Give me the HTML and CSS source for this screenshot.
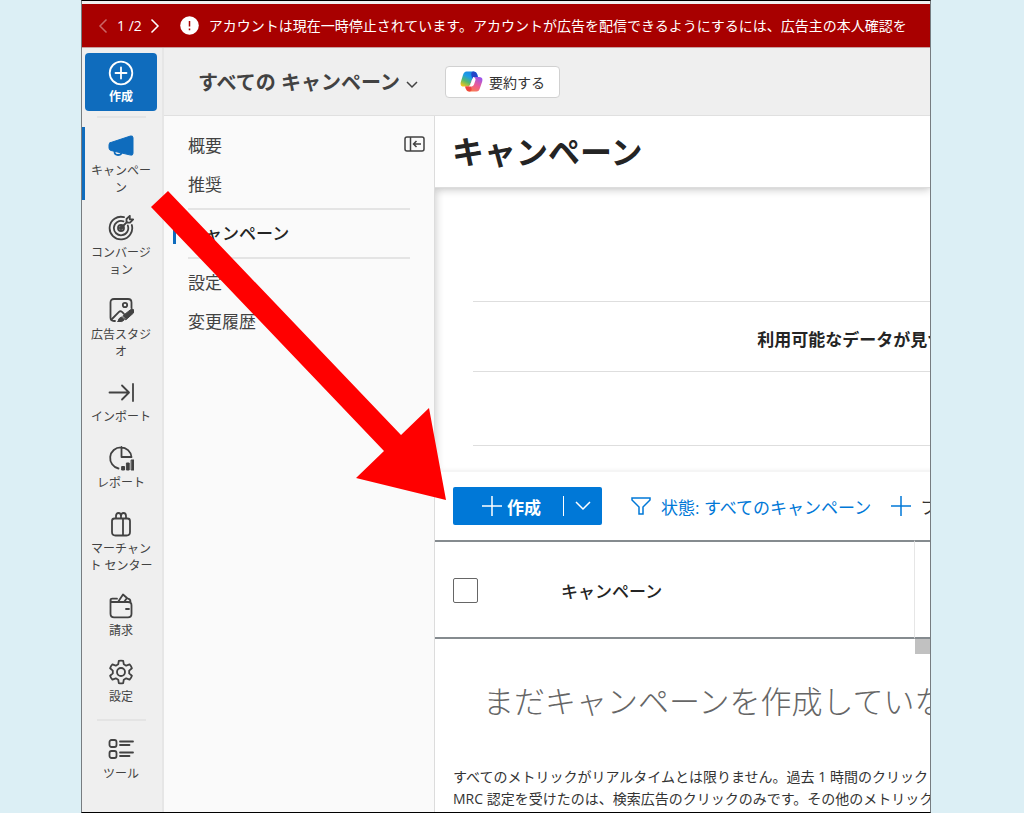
FILE: index.html
```html
<!DOCTYPE html>
<html lang="ja">
<head>
    <meta charset="UTF-8">
    <meta name="viewport" content="width=device-width, initial-scale=1">
    <title>キャンペーン</title>
    <link rel="stylesheet" href="styles.css">
</head>
<body>

<div class="frame">

    <div class="banner">
        <button class="pager" aria-label="前へ" disabled>
            <svg width="10" height="16" viewBox="0 0 10 16"><path d="M8.5 1.5 2 8l6.5 6.5"/></svg>
        </button>
        <span class="count">1 /2</span>
        <button class="pager" aria-label="次へ">
            <svg width="10" height="16" viewBox="0 0 10 16"><path d="M1.5 1.5 8 8l-6.5 6.5"/></svg>
        </button>
        <svg class="alert" width="19" height="19" viewBox="0 0 19 19">
            <circle cx="9.5" cy="9.5" r="9.3" fill="#fff"/>
            <path d="M9.5 5v5.5M9.5 12.5v1.7" stroke="#a80000" stroke-width="1.5"/>
        </svg>
        <span>アカウントは現在一時停止されています。アカウントが広告を配信できるようにするには、広告主の本人確認を</span>
    </div>

    <div class="shell">

        <nav class="rail">
            <button class="create">
                <svg class="icon" viewBox="0 0 26 26"><circle cx="13" cy="13" r="11.3"/><path d="M13 7.5v11M7.5 13h11"/></svg>
                <span>作成</span>
            </button>
            <hr>
            <a class="item active" href="#">
                <svg class="icon" viewBox="0 0 26 26"><path class="solid" d="M2 9.8 22.5 3q2.5-.6 2.5 1.8v15.5q0 2.3-2.3 1.8L3 17.5q-2-.5-2-2.6v-2.8q0-1.8 1-2.3z"/><path d="M6.5 18.5q0 3.5 3.5 3.5 2.8 0 3.5-2"/></svg>
                <span>キャンペーン</span>
            </a>
            <a class="item" href="#">
                <svg class="icon" viewBox="0 0 26 26"><path d="M16 2.2A11.3 11.3 0 1 0 23.8 10M15.5 6.3A7.2 7.2 0 1 0 19.8 10.5"/><circle cx="13" cy="13" r="3"/><path d="M13 13l6-6M18.5 7.5V4l3.3-3.2v3.6h3.4L22 7.7z"/><circle class="solid" cx="13" cy="13" r="1.5"/></svg>
                <span>コンバージョン</span>
            </a>
            <a class="item" href="#">
                <svg class="icon" viewBox="0 0 26 26"><path d="M7 24H6q-3.5 0-3.5-3.5v-15Q2.5 2 6 2h14q3.5 0 3.5 3.5V11"/><circle cx="17" cy="8" r="2.2"/><path d="M3.5 22.5l7.5-7.6q1.4-1.3 3 0l2 2"/><path class="solid" d="M10 24.5q.3-3.6 3.6-4.6l2.8 2.8Q14.5 25.5 10 24.5zM15 18.7l7.5-6q2-1.3 3.3.2 1.2 1.6-.4 3.2l-7.3 6.5z"/></svg>
                <span>広告スタジオ</span>
            </a>
            <a class="item" href="#">
                <svg class="icon" viewBox="0 0 26 26"><path d="M1.5 13.5h19M14 6.5l7 7-7 7M25 5v17"/></svg>
                <span>インポート</span>
            </a>
            <a class="item" href="#">
                <svg class="icon" viewBox="0 0 26 26"><path d="M10.5 23.5A10.7 10.7 0 1 1 23.5 12h-10V2"/><path class="solid" d="M14 21.5h2.5V25H14zM18.8 18h2.4v7h-2.4zM23.5 15H26v10h-2.5z"/></svg>
                <span>レポート</span>
            </a>
            <a class="item" href="#">
                <svg class="icon" viewBox="0 0 26 26"><path d="M6.5 7.5h13q2.5 0 2.5 2.5v11q0 3.500-3.500 3.500h-11Q4 24.500 4 21V10q0-2.500 2.500-2.500zM15 7.500v17M8 7.500V5q0-3 2.500-3T13 5v2.500M13 5q0-3 2.500-3T18 5v2.500"/></svg>
                <span>マーチャント センター</span>
            </a>
            <a class="item" href="#">
                <svg class="icon" viewBox="0 0 26 26"><path d="M2.5 7.5v13.2q0 3.6 3.6 3.6h13.8q3.6 0 3.6-3.6v-8.4q0-3.3-3.5-3.3H4.5q-2 0-2-1.7T4.5 5.7H9M18 16h3M10 9l5-7.5 4 3.5-3 4M20 5.7q2.5.3 2.5 3.5"/></svg>
                <span>請求</span>
            </a>
            <a class="item" href="#">
                <svg class="icon" viewBox="0 0 26 26"><path d="M10.8 1.8q2.2-.5 4.4 0l.6 3.5 2.4 1.4 3.4-1.3q1.6 1.6 2.3 3.9L21.2 11.6v2.8l2.7 2.3q-.7 2.3-2.3 3.9l-3.4-1.3-2.4 1.4-.6 3.5q-2.2.5-4.4 0l-.6-3.5-2.4-1.4-3.4 1.3q-1.6-1.6-2.3-3.9l2.7-2.3v-2.8L2.1 9.3q.7-2.3 2.3-3.9l3.4 1.3 2.4-1.4z"/><circle cx="13" cy="13" r="4"/></svg>
                <span>設定</span>
            </a>
            <hr>
            <a class="item" href="#">
                <svg class="icon" viewBox="0 0 26 26"><rect x="1.5" y="4" width="7" height="7" rx="2"/><rect x="1.5" y="15" width="7" height="7" rx="2"/><path d="M12 5.5h13M12 9h9.5M12 16.5h13M12 20h9.5"/></svg>
                <span>ツール</span>
            </a>
        </nav>

        <div class="workspace">

            <header class="topbar">
                <button class="scope">すべての キャンペーン
                    <svg width="12" height="8" viewBox="0 0 12 8"><path d="M1 1l5 5 5-5"/></svg>
                </button>
                <button class="summarize">
                    <svg width="23" height="21" viewBox="0 0 23 21">
                        <defs>
                            <linearGradient id="cool" x1="0.8" y1="0" x2="0.2" y2="1">
                                <stop offset="0" stop-color="#1a7fe0"/>
                                <stop offset="0.4" stop-color="#1a9de8"/>
                                <stop offset="0.7" stop-color="#55b96b"/>
                                <stop offset="1" stop-color="#f0c51c"/>
                            </linearGradient>
                            <linearGradient id="warm" x1="0.8" y1="0" x2="0.2" y2="1">
                                <stop offset="0" stop-color="#9a55ee"/>
                                <stop offset="0.5" stop-color="#ee5c92"/>
                                <stop offset="1" stop-color="#fa8440"/>
                            </linearGradient>
                        </defs>
                        <path fill="url(#cool)" d="M6.5.5H14q2.5 0 3.3 2.8L18 6h-3q-2 0-2.7 2l-2 5.5Q9.5 15.5 7 15.5H4Q-.3 15.5.8 11L3 4Q4 .5 6.5.5z"/>
                        <path fill="url(#warm)" d="M16.5 20.5H9q-2.5 0-3.3-2.8L5 15.5h2.5q2 0 2.7-2l2-5.5q.8-2 3.3-2H19q4.3 0 3.2 4.5L20 17q-1 3.5-3.5 3.5z"/>
                        <path fill="#2345c8" d="M13.5.5q2.6 0 3.5 2.8L17.8 6H15q-2 0-2.7 2l-1-4q-.5-3.5 2.2-3.5z"/>
                        <path fill="#ee4540" d="M9.5 20.5Q7 20.5 6 17.7l-.7-2.2h2.2q2 0 2.7-2l1.3 4q.6 3-2 3z"/>
                        <path fill="#fff" d="M12.2 6H15q-2 0-2.7 2l-2 5.5q-.6 1.7-2 2h3.500q1.600-.4 2.200-2l1.500-4.500Q16 6.500 12.200 6z"/>
                    </svg>
                    要約する
                </button>
            </header>

            <div class="columns">

                <aside class="side">
                    <div class="side-row">
                        <a href="#">概要</a>
                        <button class="collapse" aria-label="折りたたむ">
                            <svg width="21" height="16" viewBox="0 0 21 16"><rect x="1" y="1" width="19" height="14" rx="2"/><path d="M6.5 1v14M17 8H9.5M12.5 5l-3 3 3 3"/></svg>
                        </button>
                    </div>
                    <a href="#">推奨</a>
                    <hr>
                    <a class="current" href="#">キャンペーン</a>
                    <hr>
                    <a href="#">設定</a>
                    <a href="#">変更履歴</a>
                </aside>

                <main class="main">
                    <div class="title">
                        <h1>キャンペーン</h1>
                    </div>

                    <section class="chart">
                        <div class="band"></div>
                        <div class="band message">利用可能なデータが見つかりません</div>
                        <div class="band"></div>
                    </section>

                    <div class="toolbar">
                        <div class="split">
                            <button class="new">
                                <svg width="20" height="20" viewBox="0 0 20 20"><path d="M10 0v20M0 10h20"/></svg>
                                作成
                            </button>
                            <button class="more" aria-label="その他">
                                <svg width="16" height="10" viewBox="0 0 16 10"><path d="M1 1l7 7 7-7"/></svg>
                            </button>
                        </div>
                        <button class="filter">
                            <svg width="20" height="18" viewBox="0 0 20 18"><path d="M1 1h18v2l-7 7v7H8v-7L1 3z"/></svg>
                            状態: すべてのキャンペーン
                        </button>
                        <button class="add">
                            <svg width="20" height="20" viewBox="0 0 20 20"><path d="M10 0v20M0 10h20"/></svg>
                            フィルターの追加
                        </button>
                    </div>

                    <div class="grid">
                        <table>
                            <thead>
                                <tr>
                                    <th class="check"><input type="checkbox" aria-label="すべて選択"></th>
                                    <th>キャンペーン</th>
                                    <th class="rest"></th>
                                </tr>
                            </thead>
                            <tbody>
                                <tr>
                                    <td colspan="3">まだキャンペーンを作成していないようです</td>
                                </tr>
                            </tbody>
                        </table>
                        <span class="thumb"></span>
                    </div>

                    <p class="note">すべてのメトリックがリアルタイムとは限りません。過去 1 時間のクリック<br>MRC 認定を受けたのは、検索広告のクリックのみです。その他のメトリック</p>
                </main>

            </div>
        </div>
    </div>
</div>

<svg class="arrow" width="295" height="309" viewBox="0 0 295 309">
    <path d="M17 0 250 244l28-27 17 92-90-22 28-27L0 16z"/>
</svg>

</body>
</html>
```
FILE: styles.css
```css
* {
    box-sizing: border-box;
}

body {
    margin: 0;
    background: #dceff5;
    color: #333;
    font-family: "Open Sans", "Noto Sans CJK JP", sans-serif;
    font-size: 14px;
}

button {
    display: flex;
    align-items: center;
    margin: 0;
    padding: 0;
    border: 0;
    background: none;
    color: inherit;
    font: inherit;
    white-space: nowrap;
    cursor: pointer;
}

a {
    color: inherit;
    text-decoration: none;
}

hr {
    height: 2px;
    margin: 0;
    border: 0;
    background: #e4e4e4;
}

svg {
    flex: none;
    fill: none;
    stroke: currentColor;
    stroke-width: 2;
}

.frame {
    display: flex;
    flex-direction: column;
    min-height: 100vh;
    margin: 0 93px 0 81px;
    padding-top: 3px;
    overflow: hidden;
    border: 1px solid #777c80;
    border-top-color: #000;
    border-bottom-color: #000;
    background: #efefef;
}

/* red notice */
.banner {
    display: flex;
    align-items: center;
    height: 44px;
    padding: 0 0 0 16px;
    border-bottom: 1px solid #c9a0a0;
    background: #a80000;
    color: #fff;
    line-height: 20px;
    white-space: nowrap;
}

.pager {
    height: 20px;
}

.pager svg {
    stroke-width: 1.5;
}

.pager:disabled {
    opacity: 0.4;
}

.count {
    margin: 0 8px 0 9px;
}

.alert {
    margin: 0 10px 0 20px;
    stroke: none;
}

.shell {
    display: flex;
    flex: 1;
}

/* left rail */
.rail {
    display: flex;
    flex-direction: column;
    flex: none;
    gap: 9px;
    width: 82px;
    padding-top: 5px;
    border-right: 2px solid #e6e6e6;
    font-size: 12px;
    line-height: 17px;
    text-align: center;
}

.rail hr {
    width: 49px;
    margin-left: 15px;
}

.icon {
    width: 26px;
    height: 26px;
    stroke-width: 1.8;
    stroke-linecap: round;
    stroke-linejoin: round;
}

.solid {
    fill: currentColor;
    stroke-width: 1;
}

.create {
    flex-direction: column;
    justify-content: center;
    gap: 2px;
    height: 58px;
    margin: 0 5px -4px 3px;
    border-radius: 4px;
    background: #0f6cbd;
    color: #fff;
    font-weight: bold;
}

.item {
    display: flex;
    flex-direction: column;
    align-items: center;
    gap: 3px;
    padding: 6px 5px 4px 0;
    border-left: 3px solid transparent;
    color: #424242;
}

.item span {
    width: 66px;
    min-height: 18px;
    line-break: anywhere;
}

.item.active {
    border-left-color: #0f6cbd;
}

.item.active .icon {
    color: #0f6cbd;
}

/* header */
.workspace {
    display: flex;
    flex-direction: column;
    flex: 1;
    min-width: 0;
}

.topbar {
    display: flex;
    align-items: center;
    gap: 27px;
    height: 68px;
    padding-left: 34px;
    border-bottom: 1px solid #e0e0e0;
}

.scope {
    gap: 6px;
    color: #424242;
    font-size: 20px;
    font-weight: bold;
}

.scope svg {
    margin-top: 6px;
    stroke-width: 1.5;
}

.summarize {
    gap: 6px;
    height: 32px;
    padding: 0 14px;
    border: 1px solid #d1d1d1;
    border-radius: 4px;
    background: #fff;
}

.summarize svg {
    stroke: none;
}

.columns {
    display: flex;
    flex: 1;
}

/* second level menu */
.side {
    flex: none;
    width: 271px;
    padding: 10px 9px 0 24px;
    border-right: 1px solid #dcdcdc;
    background: #fafafa;
    color: #424242;
    font-size: 17px;
    line-height: 39px;
}

.side > a {
    display: block;
}

.side hr {
    margin: 4px 15px 4px 0;
}

.side-row {
    display: flex;
    align-items: center;
    justify-content: space-between;
}

.collapse {
    padding-bottom: 3px;
}

.collapse svg {
    stroke-width: 1.5;
}

.side .current {
    position: relative;
    color: #242424;
    font-weight: 500;
}

.current::before {
    content: "";
    position: absolute;
    top: 10px;
    left: -15px;
    width: 3px;
    height: 20px;
    background: #0f6cbd;
}

/* content */
.main {
    display: flex;
    flex-direction: column;
    flex: 1;
    min-width: 0;
    overflow: hidden;
    background: #fff;
    white-space: nowrap;
}

.title {
    display: flex;
    align-items: center;
    height: 72px;
    padding-left: 17px;
    border-bottom: 1px solid #ddd;
    box-shadow: 0 2px 8px rgba(0, 0, 0, 0.2);
}

h1 {
    margin: 0;
    color: #242424;
    font-size: 32px;
    line-height: 40px;
}

.chart {
    min-width: 878px;
    padding: 40px 0 24px 38px;
    border-bottom: 2px solid #f5f5f5;
    box-shadow: inset 6px 0 8px -5px rgba(0, 0, 0, 0.2);
}

.band {
    height: 74px;
    border-bottom: 1px solid #dedede;
}

.band.message {
    height: 70px;
    padding-top: 26px;
    color: #242424;
    font-size: 17px;
    font-weight: bold;
    line-height: 24px;
    text-align: center;
}

.toolbar {
    display: flex;
    align-items: center;
    height: 68px;
    padding-left: 18px;
    font-size: 17px;
}

.toolbar svg {
    stroke-width: 1.5;
}

.split {
    display: flex;
    align-items: center;
    flex: none;
    height: 38px;
    margin-right: 29px;
    border-radius: 2px;
    background: #0078d7;
    color: #fff;
}

.new {
    gap: 5px;
    padding: 0 22px 0 29px;
    font-weight: bold;
}

.more {
    height: 20px;
    padding: 0 11px;
    border-left: 1px solid #fff;
}

.filter {
    gap: 10px;
    margin-right: 20px;
    color: #0078d7;
}

.add {
    gap: 9px;
}

.add svg {
    color: #0078d7;
}

.grid {
    position: relative;
}

table {
    width: 100%;
    table-layout: fixed;
    border-collapse: separate;
    border-spacing: 0;
}

th {
    height: 99px;
    padding: 2px 0 0;
    border-top: 2px solid #858b8f;
    border-bottom: 2px solid #858b8f;
    color: #242424;
    font-size: 17px;
    font-weight: 500;
    text-align: left;
}

.check {
    width: 126px;
    padding-left: 18px;
}

.rest {
    width: 16px;
    border-left: 1px solid #e6e6e6;
}

input[type="checkbox"] {
    display: block;
    width: 25px;
    height: 25px;
    margin: 0;
    border: 1px solid #666;
    border-radius: 2px;
    background: #fff;
    appearance: none;
}

input[type="checkbox"]:checked {
    background: #0078d7;
}

td {
    height: 127px;
    padding: 0 0 4px 48px;
    color: #666;
    font-size: 31px;
    font-weight: 300;
    line-height: 40px;
}

.thumb {
    position: absolute;
    top: 99px;
    right: 0;
    width: 15px;
    height: 15px;
    background: #c1c1c1;
}

.note {
    margin: 0;
    padding-left: 18px;
    line-height: 22px;
}

/* pointer laid over the screen */
.arrow {
    position: absolute;
    top: 191px;
    left: 151px;
    fill: #f00;
    stroke: none;
    pointer-events: none;
}
```
